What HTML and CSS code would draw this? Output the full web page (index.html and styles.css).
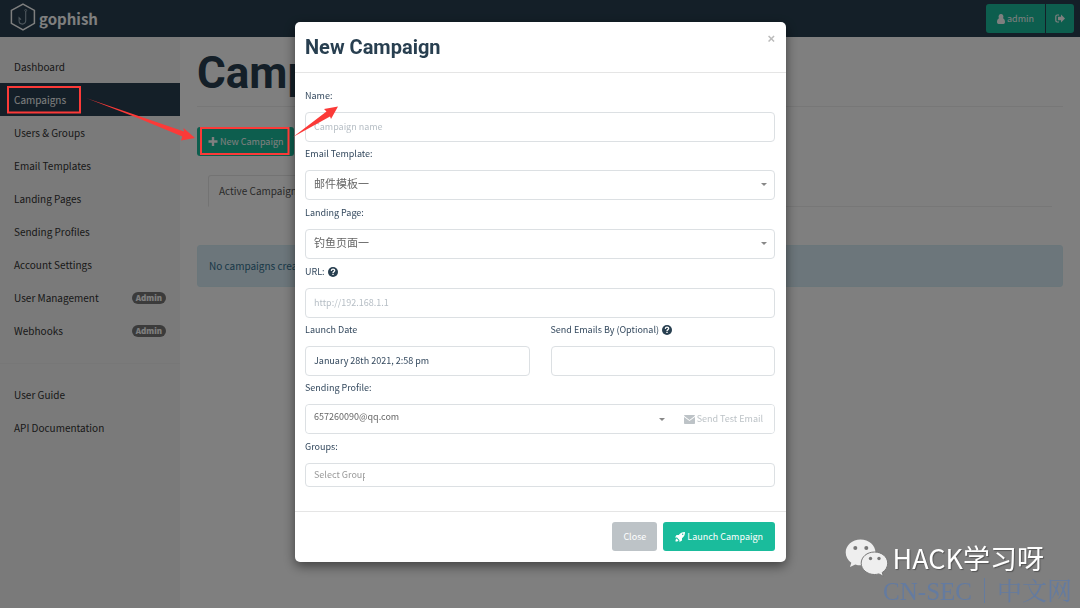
FILE: index.html
```html
<!DOCTYPE html>
<html lang="en">
<head>
<meta charset="utf-8">
<title>Gophish - Campaigns</title>
<meta name="viewport" content="width=device-width, initial-scale=1">
<link rel="stylesheet" href="styles.css">
</head>
<body>
<header class="navbar">
  <a class="brand" href="#">
    <svg class="brand-mark" viewBox="0 0 26 28" aria-hidden="true"><path d="M13 1.2 24.4 7.4V20.4L13 26.8 1.4 20.4V7.4Z" fill="none" stroke="#fff" stroke-width="1.5"/><path d="M15.7 8.2V17.8A3.3 3.3 0 0 1 9.1 17.8V14.8L11 16.6" fill="none" stroke="#9fb0bd" stroke-width="1.1"/><circle cx="15.7" cy="7.4" r="1" fill="none" stroke="#9fb0bd" stroke-width=".8"/></svg>
    <span>gophish</span>
  </a>
  <div class="account">
    <button class="btn btn-primary" type="button"><svg class="icon icon-user" viewBox="0 0 8 10" aria-hidden="true"><path d="M4 0a2.4 2.6 0 0 1 1.9 4.2C7.4 4.7 8 6.2 8 8c0 1.100-.7 2-1.600 2H1.600C.7 10 0 9.100 0 8c0-1.800.6-3.300 2.100-3.800A2.400 2.600 0 0 1 4 0Z" fill="currentColor"/></svg>admin</button>
    <button class="btn btn-primary" type="button" aria-label="Sign out"><svg class="icon" viewBox="0 0 10 9" aria-hidden="true"><path d="M4 1H2.200A1.400 1.400 0 0 0 .8 2.400v4.200A1.400 1.400 0 0 0 2.200 8H4" fill="none" stroke="currentColor" stroke-width="1.200"/><path d="M10 4.500 6 .5v2.300H3v3.400h3v2.300Z" fill="currentColor"/></svg></button>
  </div>
</header>
<div class="layout">
  <nav class="sidebar">
    <ul class="menu">
      <li><a href="#">Dashboard</a></li>
      <li><a class="active" href="#">Campaigns</a></li>
      <li><a href="#">Users &amp; Groups</a></li>
      <li><a href="#">Email Templates</a></li>
      <li><a href="#">Landing Pages</a></li>
      <li><a href="#">Sending Profiles</a></li>
      <li><a href="#">Account Settings</a></li>
      <li><a href="#">User Management<span class="badge">Admin</span></a></li>
      <li><a href="#">Webhooks<span class="badge">Admin</span></a></li>
    </ul>
    <ul class="menu menu-help">
      <li><a href="#">User Guide</a></li>
      <li><a href="#">API Documentation</a></li>
    </ul>
  </nav>
  <main class="main">
    <h1 class="page-title">Campaigns</h1>
    <button class="btn btn-primary" type="button"><svg class="icon" viewBox="0 0 9 9" aria-hidden="true"><path d="M3.300 0h2.400v3.300H9v2.400H5.700V9H3.300V5.700H0V3.300h3.300Z" fill="currentColor"/></svg>New Campaign</button>
    <div class="tabs"><a class="tab" href="#">Active Campaigns</a></div>
    <div class="alert">No campaigns created yet. Let's create one!</div>
  </main>
</div>

<div class="backdrop">
  <form class="modal" role="dialog" aria-labelledby="modal-title">
    <div class="modal-header">
      <h2 id="modal-title">New Campaign</h2>
      <button class="close" type="button" aria-label="Dismiss">×</button>
    </div>
    <div class="modal-body">
      <div class="field"><label for="name">Name:</label><input class="control" id="name" type="text" placeholder="Campaign name"></div>
      <div class="field field-select"><label for="template">Email Template:</label><div class="select"><select class="control control-cjk" id="template"><option>邮件模板一</option></select></div></div>
      <div class="field field-select"><label for="page">Landing Page:</label><div class="select"><select class="control control-cjk" id="page"><option>钓鱼页面一</option></select></div></div>
      <div class="field"><label for="url">URL: <svg class="help" viewBox="0 0 10 10" aria-hidden="true"><circle cx="5" cy="5" r="5" fill="#283f50"/><path d="M3.300 3.900C3.400 2.700 4.100 2.200 5 2.200c1 0 1.700.6 1.700 1.400C6.700 4.700 5 4.600 5 6" fill="none" stroke="#fff" stroke-width="1.300"/><path d="M4.300 6.800h1.400v1.300H4.300z" fill="#fff"/></svg></label><input class="control" id="url" type="text" placeholder="http://192.168.1.1"></div>
      <div class="field-row">
        <div class="field"><label for="launch">Launch Date</label><input class="control" id="launch" type="text" value="January 28th 2021, 2:58 pm"></div>
        <div class="field"><label for="send-by">Send Emails By (Optional) <svg class="help" viewBox="0 0 10 10" aria-hidden="true"><circle cx="5" cy="5" r="5" fill="#283f50"/><path d="M3.300 3.900C3.400 2.700 4.100 2.200 5 2.200c1 0 1.700.6 1.700 1.400C6.700 4.700 5 4.600 5 6" fill="none" stroke="#fff" stroke-width="1.300"/><path d="M4.300 6.800h1.400v1.300H4.300z" fill="#fff"/></svg></label><input class="control" id="send-by" type="text"></div>
      </div>
      <div class="field field-select"><label for="profile">Sending Profile:</label>
        <div class="input-group">
          <div class="select"><select class="control" id="profile"><option>657260090@qq.com</option></select></div>
          <button class="btn btn-test" type="button" disabled><svg class="icon icon-mail" viewBox="0 0 11 9" aria-hidden="true"><path d="M0 .8Q0 0 .8 0h9.400Q11 0 11 .8L5.500 4.900Z M0 2.100l5.500 4 5.500-4v6.100q0 .8-.8.8H.8Q0 9 0 8.200Z" fill="currentColor"/></svg>Send Test Email</button>
        </div>
      </div>
      <div class="field"><label for="groups">Groups:</label><div class="control tags"><input id="groups" type="text" placeholder="Select Group"></div></div>
    </div>
    <div class="modal-footer">
      <button class="btn btn-default" type="button">Close</button>
      <button class="btn btn-primary" type="button"><svg class="icon icon-rocket" viewBox="0 0 10 10" aria-hidden="true"><path d="M10 0C7 0 5.300 1 3.700 3H1.500L0 5.500l2 .1 2.400 2.400.1 2L7 8.500V6.300C9 4.700 10 3 10 0Z" fill="currentColor"/><path d="M1.600 6.500C.6 7.200.5 8.300.5 9.500c1.200 0 2.300-.1 3-1.100Z" fill="currentColor"/><circle cx="7.700" cy="2.300" r=".7" fill="#1abc9c"/></svg>Launch Campaign</button>
    </div>
  </form>
</div>

<svg class="annotations" width="345" height="160" viewBox="0 0 345 160" aria-hidden="true">
  <g fill="none" stroke="#fb3a38" stroke-width="2"><path d="M8 87H80V112.500H8Z"/><path d="M201 128H288.500V154H201Z"/></g>
  <g fill="#fb3a38"><path d="M86 98 184 131.500 183.500 128 195 138 181 140.500 182.300 136.500 139 118.500Z"/><path d="M293 137 326.500 111.500 324 109 338 106.500 331 119 330 116.500Z"/></g>
</svg>
<div class="watermark">
  <svg class="wechat" viewBox="0 0 44 38" aria-hidden="true"><path d="M15.500.5C7.300.5.7 6.200.7 13.500c0 4.200 2.200 7.800 5.600 10.200L5 28l5.300-2.600c1.800.6 3.400.8 5.200.8 8.300 0 15-5.600 15-12.700S23.800.5 15.500.5Z" fill="#eee"/><path d="M29.500 13C22 13 16.200 18 16.200 24.200S22 35.500 29.500 35.500c1.500 0 3-.2 4.400-.6l4.500 2.400-1.200-3.800c3.400-2.100 5.500-5.500 5.500-9.300C42.700 18 37 13 29.500 13Z" fill="#eee" stroke="#777" stroke-width="1"/><g fill="#777"><circle cx="10.300" cy="9" r="2"/><circle cx="21.300" cy="9" r="2"/><circle cx="25.500" cy="19.500" r="1.700"/><circle cx="34" cy="19.500" r="1.700"/></g></svg>
  <span>HACK学习呀</span>
</div>
<div class="site-mark">CN-SEC｜中文网</div>
</body>
</html>
```
FILE: styles.css
```css
* { box-sizing: border-box; }
body {
  margin: 0;
  min-height: 100vh;
  display: flex;
  flex-direction: column;
  overflow: hidden;
  background: #fff;
  color: #34495e;
  font: 10px/16px "Noto Sans CJK SC", "Open Sans", sans-serif;
}
button, input, select { font: inherit; color: inherit; }
a { color: inherit; text-decoration: none; }

.navbar {
  height: 37px;
  padding: 0 6px 0 10px;
  display: flex;
  align-items: center;
  justify-content: space-between;
  background: #283f50;
  color: #fff;
}
.brand { display: flex; align-items: center; gap: 3px; font-size: 15px; font-weight: 700; }
.brand-mark { width: 26px; height: 28px; margin-bottom: 3px; }
.account { display: flex; gap: 1px; }
.account .btn:first-child { border-radius: 3px 0 0 3px; }
.account .btn:last-child { border-radius: 0 3px 3px 0; padding: 0 9px; }

.btn {
  height: 29px;
  padding: 0 11px;
  border: 0;
  border-radius: 3px;
  display: inline-flex;
  align-items: center;
  justify-content: center;
  gap: 2px;
  font-size: 9px;
  white-space: nowrap;
}
.btn-primary { background: #1abc9c; color: #fff; }
.btn-default { background: #bdc3c7; color: #fff; }
.icon { width: 10px; height: 9px; }
.icon-user { width: 8px; height: 10px; }
.icon-rocket { width: 10px; height: 10px; }
.icon-mail { width: 11px; height: 9px; }

.layout { flex: 1; display: flex; }
.sidebar { width: 180px; flex: none; padding-top: 13px; background: #f5f5f5; color: #333; }
.menu { list-style: none; margin: 0; padding: 0; }
.menu a {
  height: 33px;
  padding: 0 14px;
  display: flex;
  align-items: center;
  justify-content: space-between;
}
.menu .active { background: #283f50; color: #fff; }
.menu-help { margin-top: 16px; padding-top: 14px; border-top: 1px solid #eee; }
.badge {
  padding: 0 4px;
  border-radius: 6px;
  background: #777;
  color: #fff;
  font-size: 8px;
  line-height: 12px;
  font-weight: 900;
}

.main { flex: 1; min-width: 0; padding: 0 17px; }
.page-title {
  margin: 0 0 20px;
  height: 70px;
  border-bottom: 1px solid #eee;
  color: #283f50;
  font: 700 44px/72px Roboto, sans-serif;
}
.tabs { margin: 19px 11px 0; display: flex; border-bottom: 1px solid #eee; }
.tab {
  height: 32px;
  margin-bottom: -1px;
  padding: 7px 10px;
  border: 1px solid #e6e6e6;
  border-bottom-color: #fff;
  border-radius: 3px 3px 0 0;
  color: #555;
}
.alert {
  margin-top: 38px;
  padding: 12px 11px;
  border: 1px solid #d4edf5;
  border-radius: 3px;
  background: #d9edf7;
  color: #31708f;
}

.backdrop {
  position: fixed;
  inset: 0;
  padding: 22px 16px 22px 17px;
  display: flex;
  justify-content: center;
  align-items: flex-start;
  background: rgba(0, 0, 0, .5);
}
.modal {
  width: 100%;
  max-width: 491px;
  border-radius: 5px;
  background: #fff;
  box-shadow: 0 4px 12px rgba(0, 0, 0, .5);
  font-size: 9px;
}
.modal-header {
  padding: 10px 11px 10px 10px;
  display: flex;
  align-items: flex-start;
  justify-content: space-between;
  border-bottom: 1px solid #e5e5e5;
}
.modal-header h2 { margin: 0; color: #283f50; font: 700 20px/30px Roboto, sans-serif; }
.close {
  padding: 0;
  border: 0;
  background: none;
  color: #bbb;
  font: 700 13px/14px "Liberation Sans", sans-serif;
}
.modal-body { padding: 11px 11px 24px 10px; }
.field-select { padding-bottom: 1px; }
.field label { display: flex; align-items: center; gap: 3px; height: 28px; padding-bottom: 5px; }
.help { width: 10px; height: 10px; }
.field-row { display: grid; grid-template-columns: 1fr 1fr; gap: 21px; }
.control {
  display: block;
  width: 100%;
  height: 30px;
  padding: 0 8px 2px;
  border: 1px solid #dce0e3;
  border-radius: 4px;
  outline: 0;
  background: #fff;
}
.control-cjk { font-size: 11px; }
.control::placeholder { color: #b6bec5; }
.select { position: relative; flex: 1; }
.select select { appearance: none; padding: 0 8px 4px; color: #666; }
.select::after {
  content: "";
  position: absolute;
  top: 13px;
  right: 8px;
  border: 3px solid transparent;
  border-top-color: #888;
  border-bottom: 0;
}
.input-group { display: flex; border: 1px solid #dce0e3; border-radius: 4px; }
.input-group .control, .input-group .btn { height: 28px; border: 0; }
.btn-test { background: #fff; color: #bdc3c7; }
.tags { height: 24px; padding-bottom: 0; display: flex; }
.tags input { width: 51px; padding: 0; border: 0; outline: 0; }
.tags input::placeholder { color: #999; }
.modal-footer {
  padding: 10px 11px 11px;
  display: flex;
  justify-content: flex-end;
  gap: 6px;
  border-top: 1px solid #e5e5e5;
}
.modal-footer .btn-primary { padding: 0 12px; }

.annotations { position: absolute; left: 0; top: 0; pointer-events: none; }
.watermark {
  position: fixed;
  right: 36px;
  bottom: 31px;
  display: flex;
  align-items: center;
  gap: 4px;
  color: #fff;
  font-size: 27px;
  line-height: 38px;
  text-shadow: 1px 1px 1px #555;
}
.wechat { width: 44px; height: 38px; }
.site-mark {
  position: fixed;
  right: 8px;
  bottom: 0;
  color: #647ba0;
  font: 25px/32px "Liberation Serif", "Noto Serif CJK SC", "Noto Sans CJK SC", serif;
}
```
